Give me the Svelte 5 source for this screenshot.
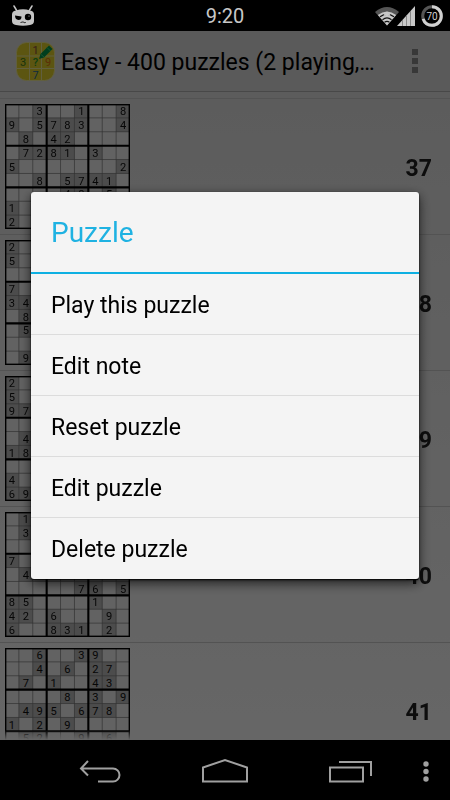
<script lang="ts">
	type Puzzle = { id: number; rows: string[] };

	const title = 'Easy - 400 puzzles (2 playing,…';

	const puzzles: Puzzle[] = [
		{
			id: 37,
			rows: ['..3..1..8', '9.5783..4', '.8.42....', '.7281.3..', '5.......2', '..8.5741.', '....48.5.', '1........', '2........']
		},
		{
			id: 38,
			rows: ['2........', '5........', '.........', '7........', '34.......', '.8.......', '.5.......', '.........', '.9.......']
		},
		{
			id: 39,
			rows: ['2........', '5........', '97.......', '.........', '.4.......', '18.......', '.........', '4........', '69.......']
		},
		{
			id: 40,
			rows: ['.1.......', '.3.......', '.........', '7........', '.4.......', '.....76.5', '85....1..', '42.6...9.', '6..831.2.']
		},
		{
			id: 41,
			rows: ['..6..39..', '..4.6.27.', '.7.1..43.', '....8.3.9', '.495.678.', '1.2.9....', '.52..9.6.', '.........', '.........']
		}
	];

	const actions = ['Play this puzzle', 'Edit note', 'Reset puzzle', 'Edit puzzle', 'Delete puzzle'];

	const thin = [1, 2, 4, 5, 7, 8];
	const thick = [3, 6];
</script>

<div class="screen">
	<header class="status">
		<svg class="cid" viewBox="0 0 24 22" aria-hidden="true">
			<path d="M3 1l3 5M21 1l-3 5" stroke="#c4c4c4" stroke-width="1.5" stroke-linecap="round" />
			<path d="M5 5.500Q12 3 19 5.500Q23 6 23 9.500V16Q23 19.500 19 20Q12 21.500 5 20Q1 19.500 1 16V9.500Q1 6 5 5.500Z" fill="#c4c4c4" />
			<path d="M4 10.500L10.500 11.500Q10.500 15 7.500 15Q4 14.500 4 10.500Z" fill="#000" />
			<circle cx="17" cy="12" r="3.200" fill="#000" />
			<circle cx="18" cy="11" r=".6" fill="#c4c4c4" />
			<path d="M9.500 17.500l2.500-.6 2 1 .8-.6" fill="none" stroke="#000" stroke-width=".8" />
		</svg>
		<time>9:20</time>
		<div class="signals">
			<svg class="wifi" viewBox="0 0 24 20" aria-hidden="true">
				<path d="M0 6Q12-4 24 6L12 19.500Z" fill="#555" />
				<path d="M2.800 9Q12 2 21.200 9L12 19.500Z" fill="#c8c8c8" />
				<path d="M5 10.800Q12 5.500 19 10.800M7.500 13.700Q12 10.200 16.500 13.700M9.500 16.300Q12 14.500 14.500 16.300" fill="none" stroke="#111" stroke-width="1.200" />
				<path d="M12 6v5M9 9.500l3-3 3 3" fill="none" stroke="#c8c8c8" stroke-width="1.500" />
			</svg>
			<svg class="cell" viewBox="0 0 18 20" aria-hidden="true">
				<path d="M0 20L18 0V20Z" fill="#c8c8c8" />
				<path d="M5.500 14V20M9.500 9.500V20M13.500 5V20" stroke="#888" />
			</svg>
			<svg class="battery" viewBox="0 0 22 22" aria-hidden="true">
				<circle cx="11" cy="11" r="9.300" fill="none" stroke="#555" stroke-width="3" />
				<circle cx="11" cy="11" r="9.300" fill="none" stroke="#d0d0d0" stroke-width="3" pathLength="100" stroke-dasharray="70 30" transform="rotate(-90 11 11)" />
				<text x="11" y="15" text-anchor="middle">70</text>
			</svg>
		</div>
	</header>

	<main>
		<div class="action-bar">
			<svg class="logo" viewBox="0 0 39 39" aria-hidden="true">
				<rect x=".5" y=".5" width="38" height="38" rx="10" fill="#e5d42c" stroke="#f3ee9c" />
				<path d="M13.500 1V38M25.500 1V38M1 14H38M1 26.500H38" stroke="#f3ee9c" />
				<text x="19.500" y="12" fill="#8b4a3a">1</text>
				<text x="7" y="24" fill="#39801d">3</text>
				<text x="19.500" y="24" class="query" fill="#1d9e2b">?</text>
				<text x="32" y="24" fill="#e87511">9</text>
				<text x="19.500" y="37" fill="#256f9c">7</text>
				<path d="M23 17L24.500 12L33 3.500L36.500 7L28 15.500Z" fill="#009c4b" />
				<path d="M25 12.500L28 15M31 5.500L34.500 9" stroke="#3ed27f" />
			</svg>
			<h1>{title}</h1>
			<button class="overflow" aria-label="More options">
				<svg viewBox="0 0 6 24"><path d="M0 0H6V6H0ZM0 9H6V15H0ZM0 18H6V24H0Z" fill="#8c8c8c" /></svg>
			</button>
		</div>

		<ul class="puzzles">
			{#each puzzles as puzzle (puzzle.id)}
				<li>
					<svg class="board" viewBox="0 0 180 180" role="img" aria-label="Puzzle {puzzle.id}">
						<rect width="180" height="180" fill="#f6f6f6" />
						{#each puzzle.rows as row, y}
							{#each row as digit, x}
								{#if digit !== '.'}
									<rect x={x * 20} y={y * 20} width="20" height="20" fill="#bdbdbd" />
									<text x={x * 20 + 10} y={y * 20 + 16}>{digit}</text>
								{/if}
							{/each}
						{/each}
						{#each thin as n}
							<path d="M{n * 20} 0V180M0 {n * 20}H180" stroke="#777" stroke-width="1" />
						{/each}
						{#each thick as n}
							<path d="M{n * 20} 0V180M0 {n * 20}H180" stroke="#000" stroke-width="3" />
						{/each}
						<rect x="1" y="1" width="178" height="178" fill="none" stroke="#000" stroke-width="2" />
					</svg>
					<span>{puzzle.id}</span>
				</li>
			{/each}
		</ul>

		<div class="scrim">
			<div class="dialog" role="dialog" aria-labelledby="dialog-title">
				<h2 id="dialog-title">Puzzle</h2>
				{#each actions as action}
					<button>{action}</button>
				{/each}
			</div>
		</div>
	</main>

	<nav>
		<button aria-label="Back">
			<svg width="44" height="26" viewBox="0 0 44 26">
				<path d="M10 3L3 10.500L10 17.500M3 10.500H35A6 6 0 0 1 35 23.500H20" />
			</svg>
		</button>
		<button aria-label="Home">
			<svg width="48" height="26" viewBox="0 0 48 26">
				<path d="M2 23.500V9.500L24 2L46 9.500V23.500Z" />
			</svg>
		</button>
		<button aria-label="Recent apps">
			<svg width="44" height="26" viewBox="0 0 44 26">
				<path d="M2 9.500H35V23.500H2ZM11 4H43V18" />
			</svg>
		</button>
		<button aria-label="Menu">
			<svg width="6" height="26" viewBox="0 0 6 26">
				<g class="dots"><circle cx="3" cy="6" r="2.700" /><circle cx="3" cy="13.500" r="2.700" /><circle cx="3" cy="21" r="2.700" /></g>
			</svg>
		</button>
	</nav>
</div>

<style>
	:global(body) {
		margin: 0;
		background: #000;
	}
	.screen {
		display: flex;
		flex-direction: column;
		height: 100vh;
		overflow: hidden;
		font-family: Roboto, sans-serif;
	}
	svg {
		display: block;
		flex: none;
	}
	button {
		border: 0;
		padding: 0;
		background: none;
		font: inherit;
		cursor: pointer;
	}

	.status {
		display: grid;
		grid-template-columns: 1fr auto 1fr;
		align-items: center;
		height: 31px;
		padding: 0 7px 0 11px;
		background: #000;
		color: #c8c8c8;
	}
	.cid {
		width: 24px;
		height: 22px;
	}
	time {
		padding: 2px 4px 0 0;
		font-size: 20px;
		line-height: 29px;
	}
	.signals {
		display: flex;
		justify-content: flex-end;
		align-items: center;
	}
	.wifi {
		width: 24px;
		height: 20px;
		margin-right: -2px;
	}
	.cell {
		width: 18px;
		height: 20px;
		margin-right: 6px;
	}
	.battery {
		width: 22px;
		height: 22px;
	}
	.battery text {
		font-size: 10px;
		fill: #d0d0d0;
	}

	main {
		position: relative;
		flex: 1;
		display: flex;
		flex-direction: column;
		min-height: 0;
		background: linear-gradient(#e4e4e4, #ffffff);
	}
	.action-bar {
		display: flex;
		align-items: center;
		flex: none;
		height: 60px;
		padding: 0 16px;
		border-bottom: 1px solid #b4b4b4;
		background: #e0e0e0;
	}
	.logo {
		width: 39px;
		height: 39px;
	}
	.logo text {
		font-size: 11px;
		text-anchor: middle;
	}
	.logo .query {
		font-weight: 500;
	}
	h1 {
		flex: 1;
		margin: 0 0 0 6px;
		padding-top: 4px;
		font-size: 23px;
		font-weight: 400;
		line-height: 30px;
		white-space: nowrap;
		color: #000;
	}
	.overflow {
		padding: 0 16px;
	}
	.overflow svg {
		width: 6px;
		height: 24px;
	}

	.puzzles {
		flex: 1;
		min-height: 0;
		margin: 0;
		padding: 6px 0 0;
		overflow: hidden;
		list-style: none;
		mask-image: linear-gradient(to top, transparent, #000 10px);
	}
	li {
		display: flex;
		align-items: center;
		justify-content: space-between;
		padding: 5px 18px 5px 5px;
		border-top: 1px solid #d0d0d0;
		font-size: 23px;
		font-weight: 700;
		color: #222;
	}
	li span {
		padding-top: 3px;
	}
	.board {
		width: 125px;
		height: 125px;
	}
	.board text {
		font-size: 16px;
		font-weight: 400;
		text-anchor: middle;
		fill: #111;
	}

	.scrim {
		position: absolute;
		inset: 0;
		display: flex;
		align-items: center;
		padding: 0 31px;
		background: rgba(0, 0, 0, 0.6);
	}
	.dialog {
		flex: 1;
		display: flex;
		flex-direction: column;
		border-radius: 3px;
		background: #f4f4f4;
		box-shadow: 0 1px 2px #000, 0 4px 12px rgba(0, 0, 0, 0.7);
	}
	h2 {
		margin: 0;
		padding: 2px 20px 0;
		border-bottom: 2px solid #0eb0e2;
		font-size: 28px;
		font-weight: 400;
		line-height: 78px;
		color: #1fb2e2;
	}
	.dialog button {
		padding: 4px 20px 0;
		border-bottom: 1px solid #dcdcdc;
		font-size: 23px;
		line-height: 56px;
		text-align: left;
		color: #000;
	}
	.dialog button:last-child {
		border-bottom-color: transparent;
	}

	nav {
		display: grid;
		grid-template-columns: 1fr 1fr 1fr 25px;
		flex: none;
		height: 60px;
		padding: 0 12px 0 37px;
		background: #000;
	}
	nav button {
		display: flex;
		align-items: center;
		justify-content: center;
		padding-top: 2px;
	}
	nav path {
		fill: none;
		stroke: #a0a0a0;
		stroke-width: 2;
	}
	.dots {
		fill: #a0a0a0;
	}
</style>
